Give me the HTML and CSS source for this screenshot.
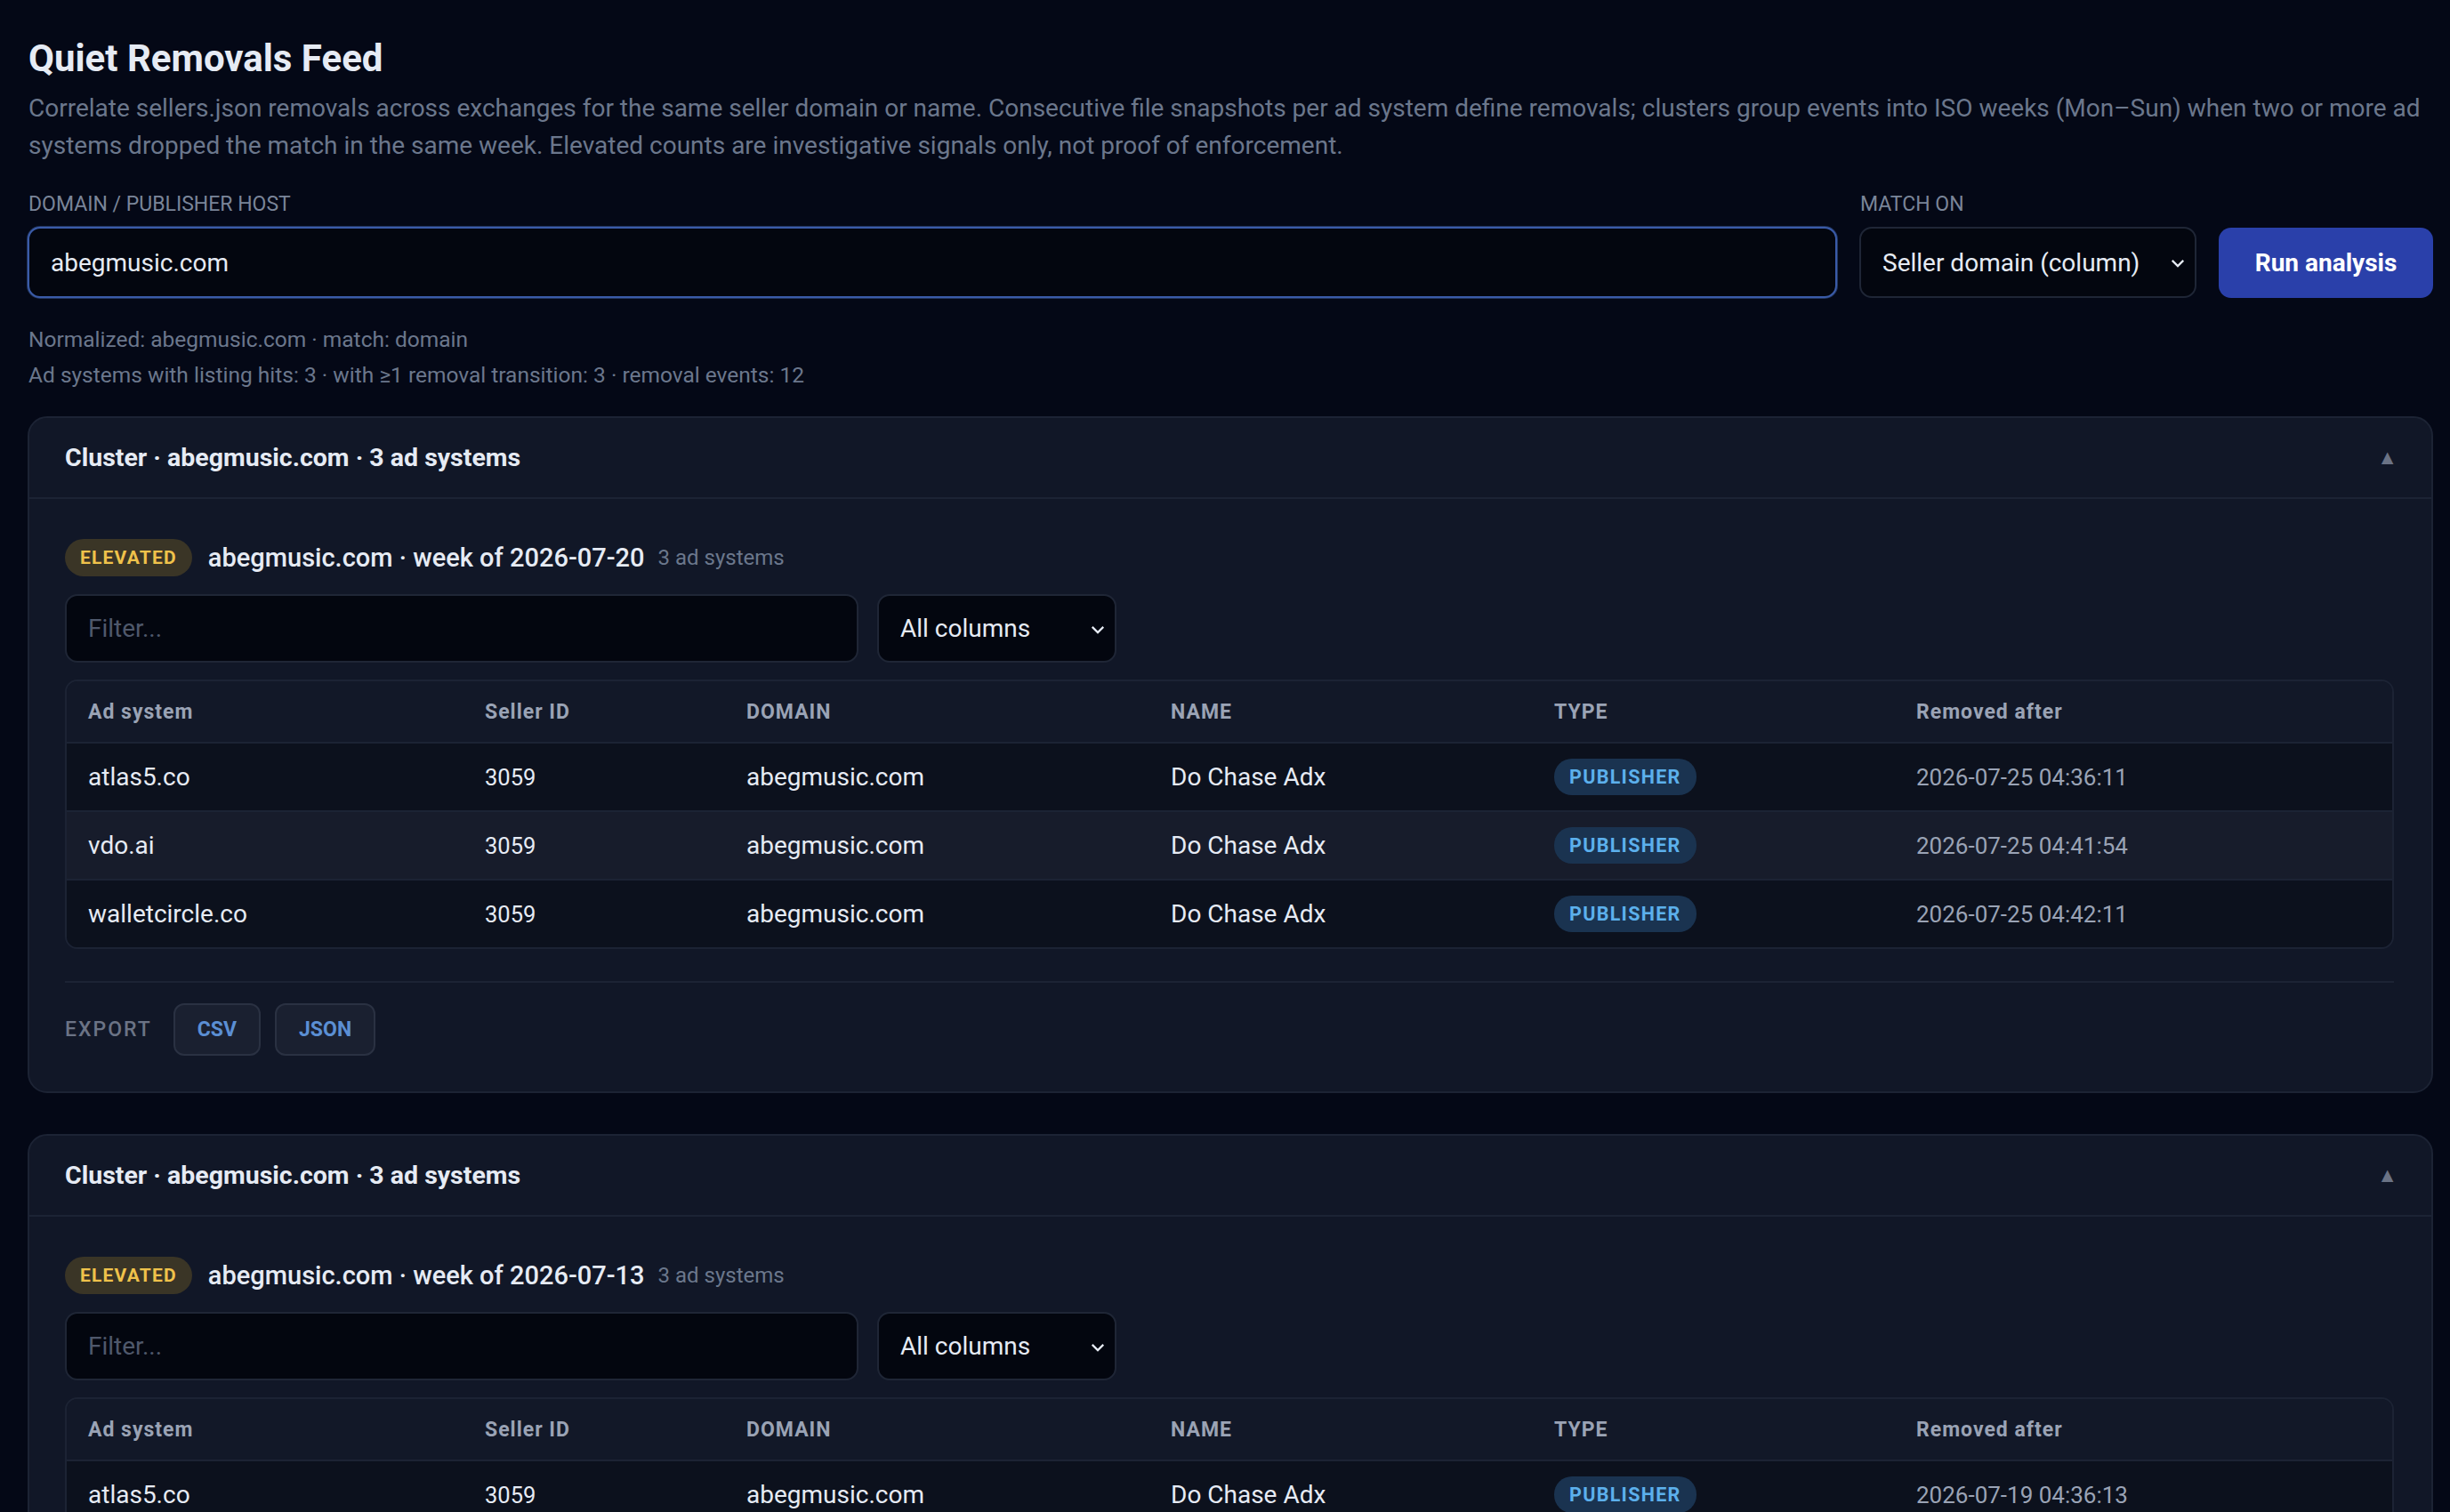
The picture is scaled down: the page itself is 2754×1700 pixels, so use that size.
FILE: index.html
```html
<!DOCTYPE html>
<html lang="en">
<head>
  <meta charset="UTF-8" />
  <meta name="viewport" content="width=device-width, initial-scale=1.0" />
  <title>Quiet Removals Feed</title>
  <link rel="stylesheet" href="styles.css">
</head>
<body>
  <h1>Quiet Removals Feed</h1>
  <p class="lede">Correlate sellers.json removals across exchanges for the same seller domain or name. Consecutive file snapshots per ad system define removals; clusters group events into ISO weeks (Mon–Sun) when two or more ad systems dropped the match in the same week. Elevated counts are investigative signals only, not proof of enforcement.</p>

  <form class="controls" onsubmit="return false">
    <div class="field grow">
      <label for="domain">DOMAIN / PUBLISHER HOST</label>
      <input type="text" id="domain" class="text-input focused" value="abegmusic.com" />
    </div>
    <div class="field">
      <label for="match-on">MATCH ON</label>
      <div class="select-wrap match-select">
        <select id="match-on">
          <option>Seller domain (column)</option>
          <option>Seller name</option>
        </select>
        <svg class="chevron" viewBox="0 0 16 16"><path d="M3 5.5l5 5 5-5" /></svg>
      </div>
    </div>
    <button type="button" id="run-button">Run analysis</button>
  </form>

  <div class="meta">
    <div>Normalized: abegmusic.com · match: domain</div>
    <div>Ad systems with listing hits: 3 · with ≥1 removal transition: 3 · removal events: 12</div>
  </div>

  <section class="cluster">
    <div class="cluster-header">
      <span>Cluster · abegmusic.com · 3 ad systems</span>
      <span class="caret">▲</span>
    </div>
    <div class="cluster-body">
      <div class="week-row">
        <span class="badge-elevated">ELEVATED</span>
        <span class="week-title">abegmusic.com · week of 2026-07-20</span>
        <span class="week-count">3 ad systems</span>
      </div>
      <div class="filter-row">
        <input type="text" class="text-input filter" placeholder="Filter..." />
        <div class="select-wrap col-select">
          <select>
            <option>All columns</option>
          </select>
          <svg class="chevron" viewBox="0 0 16 16"><path d="M3 5.5l5 5 5-5" /></svg>
        </div>
      </div>
      <div class="table-wrap">
        <table>
          <colgroup>
            <col style="width:446px"><col style="width:294px"><col style="width:477px"><col style="width:431px"><col style="width:407px"><col>
          </colgroup>
          <thead>
            <tr><th>Ad system</th><th>Seller ID</th><th>DOMAIN</th><th>NAME</th><th>TYPE</th><th>Removed after</th></tr>
          </thead>
          <tbody>
            <tr><td>atlas5.co</td><td class="small">3059</td><td>abegmusic.com</td><td>Do Chase Adx</td><td><span class="badge-type">PUBLISHER</span></td><td class="date">2026-07-25 04:36:11</td></tr>
            <tr><td>vdo.ai</td><td class="small">3059</td><td>abegmusic.com</td><td>Do Chase Adx</td><td><span class="badge-type">PUBLISHER</span></td><td class="date">2026-07-25 04:41:54</td></tr>
            <tr><td>walletcircle.co</td><td class="small">3059</td><td>abegmusic.com</td><td>Do Chase Adx</td><td><span class="badge-type">PUBLISHER</span></td><td class="date">2026-07-25 04:42:11</td></tr>
          </tbody>
        </table>
      </div>
      <div class="export-row">
        <span class="export-label">EXPORT</span>
        <button type="button" class="export-btn">CSV</button>
        <button type="button" class="export-btn">JSON</button>
      </div>
    </div>
  </section>

  <section class="cluster">
    <div class="cluster-header">
      <span>Cluster · abegmusic.com · 3 ad systems</span>
      <span class="caret">▲</span>
    </div>
    <div class="cluster-body">
      <div class="week-row">
        <span class="badge-elevated">ELEVATED</span>
        <span class="week-title">abegmusic.com · week of 2026-07-13</span>
        <span class="week-count">3 ad systems</span>
      </div>
      <div class="filter-row">
        <input type="text" class="text-input filter" placeholder="Filter..." />
        <div class="select-wrap col-select">
          <select>
            <option>All columns</option>
          </select>
          <svg class="chevron" viewBox="0 0 16 16"><path d="M3 5.5l5 5 5-5" /></svg>
        </div>
      </div>
      <div class="table-wrap">
        <table>
          <colgroup>
            <col style="width:446px"><col style="width:294px"><col style="width:477px"><col style="width:431px"><col style="width:407px"><col>
          </colgroup>
          <thead>
            <tr><th>Ad system</th><th>Seller ID</th><th>DOMAIN</th><th>NAME</th><th>TYPE</th><th>Removed after</th></tr>
          </thead>
          <tbody>
            <tr><td>atlas5.co</td><td class="small">3059</td><td>abegmusic.com</td><td>Do Chase Adx</td><td><span class="badge-type">PUBLISHER</span></td><td class="date">2026-07-19 04:36:13</td></tr>
            <tr><td>vdo.ai</td><td class="small">3059</td><td>abegmusic.com</td><td>Do Chase Adx</td><td><span class="badge-type">PUBLISHER</span></td><td class="date">2026-07-19 04:41:40</td></tr>
            <tr><td>walletcircle.co</td><td class="small">3059</td><td>abegmusic.com</td><td>Do Chase Adx</td><td><span class="badge-type">PUBLISHER</span></td><td class="date">2026-07-19 04:42:02</td></tr>
          </tbody>
        </table>
      </div>
      <div class="export-row">
        <span class="export-label">EXPORT</span>
        <button type="button" class="export-btn">CSV</button>
        <button type="button" class="export-btn">JSON</button>
      </div>
    </div>
  </section>
</body>
</html>
```

FILE: styles.css
```css
body {
  font-family: Roboto, 'Noto Sans', sans-serif;
  background-color: #040816;
  color: #e6ebf4;
  margin: 0;
  padding: 41px 19px 40px 31px;
}
h1 {
  font-size: 42px;
  font-weight: 700;
  line-height: 50px;
  margin: 0 0 10px 1px;
}
.lede {
  font-size: 28px;
  line-height: 42px;
  color: #6b778c;
  margin: 0 0 31px 1px;
}
.controls {
  display: flex;
  align-items: flex-end;
  gap: 25px;
}
.field {
  display: flex;
  flex-direction: column;
}
.field.grow {
  flex: 1;
}
label {
  font-size: 23px;
  line-height: 28px;
  color: #7a8599;
  margin: 0 0 11px 1px;
}
.text-input {
  box-sizing: border-box;
  height: 80px;
  padding: 0 24px;
  background: #03060f;
  border: 2px solid #1f2636;
  border-radius: 14px;
  color: #e6ebf4;
  font-family: Roboto, 'Noto Sans', sans-serif;
  font-size: 28px;
  outline: none;
}
.text-input.focused {
  border-color: #3a5ba8;
  box-shadow: 0 0 0 1px #22355f;
}
.text-input::placeholder {
  color: #4f586b;
}
.select-wrap {
  position: relative;
}
.select-wrap select {
  appearance: none;
  box-sizing: border-box;
  width: 100%;
  height: 80px;
  padding: 0 24px;
  background: #03060f;
  border: 2px solid #1f2636;
  border-radius: 14px;
  color: #e6ebf4;
  font-family: Roboto, 'Noto Sans', sans-serif;
  font-size: 28px;
  outline: none;
}
.chevron {
  position: absolute;
  right: 11px;
  top: 50%;
  width: 20px;
  height: 20px;
  margin-top: -9px;
  fill: none;
  stroke: #e6ebf4;
  stroke-width: 1.8;
}
.match-select {
  width: 379px;
}
#run-button {
  height: 79px;
  width: 241px;
  background-color: #2a40aa;
  color: #fff;
  border: none;
  border-radius: 14px;
  font-family: Roboto, 'Noto Sans', sans-serif;
  font-size: 28px;
  font-weight: 700;
  cursor: pointer;
}
.meta {
  font-size: 24.5px;
  line-height: 40px;
  color: #6b778c;
  margin: 27px 0 26px 1px;
}
.cluster {
  background: #111727;
  border: 2px solid #1c2334;
  border-radius: 22px;
  margin-bottom: 46px;
}
.cluster-header {
  display: flex;
  justify-content: space-between;
  align-items: center;
  height: 89px;
  padding: 0 38px 0 40px;
  border-bottom: 2px solid #1c2334;
  font-size: 28.5px;
  font-weight: 700;
}
.caret {
  color: #6b7385;
  font-size: 23px;
}
.cluster-body {
  padding: 45px 42px 40px 40px;
}
.week-row {
  display: flex;
  align-items: center;
  gap: 18px;
  height: 42px;
}
.badge-elevated {
  background: #3a3526;
  color: #efc24b;
  font-size: 21px;
  font-weight: 700;
  letter-spacing: 1.2px;
  padding: 0 17px;
  line-height: 42px;
  border-radius: 21px;
}
.week-title {
  font-size: 29px;
  font-weight: 500;
}
.week-count {
  font-size: 24px;
  color: #6b778c;
  margin-left: -3px;
}
.filter-row {
  display: flex;
  gap: 21px;
  margin-top: 20px;
}
.filter {
  width: 892px;
  height: 77px;
}
.col-select {
  width: 269px;
}
.col-select select {
  height: 77px;
}
.table-wrap {
  margin-top: 19px;
  border: 2px solid #1c2334;
  border-radius: 14px;
  overflow: hidden;
}
table {
  width: 100%;
  border-collapse: collapse;
  table-layout: fixed;
}
th {
  text-align: left;
  height: 68px;
  padding: 0 24px;
  font-size: 23px;
  font-weight: 700;
  letter-spacing: 1px;
  color: #9aa3b5;
  background: #121828;
  border-bottom: 2px solid #1c2334;
}
td {
  height: 75px;
  padding: 0 24px;
  font-size: 28px;
  color: #e6ebf4;
  background: #0c111d;
  border-top: 2px solid #1c2334;
}
tbody tr:first-child td {
  border-top: none;
}
tbody tr:nth-child(even) td {
  background: #171c2b;
}
td.small {
  font-size: 25.5px;
}
td.date {
  font-size: 26px;
  color: #9aa3b5;
}
.badge-type {
  display: inline-block;
  background: #1a3350;
  color: #5cb0ec;
  font-size: 21.5px;
  font-weight: 700;
  letter-spacing: 1.3px;
  line-height: 41px;
  padding: 0 17px;
  border-radius: 20px;
}
.export-row {
  display: flex;
  align-items: center;
  gap: 16px;
  margin-top: 36px;
  padding-top: 23px;
  border-top: 2px solid #1c2334;
}
.export-label {
  font-size: 23px;
  font-weight: 500;
  letter-spacing: 2px;
  color: #6b7385;
  margin-right: 8px;
}
.export-btn {
  height: 59px;
  padding: 0 25px;
  background: #1a2030;
  border: 2px solid #2a3142;
  border-radius: 12px;
  color: #5b8fd4;
  font-family: Roboto, 'Noto Sans', sans-serif;
  font-size: 23px;
  font-weight: 700;
  cursor: pointer;
}
```
